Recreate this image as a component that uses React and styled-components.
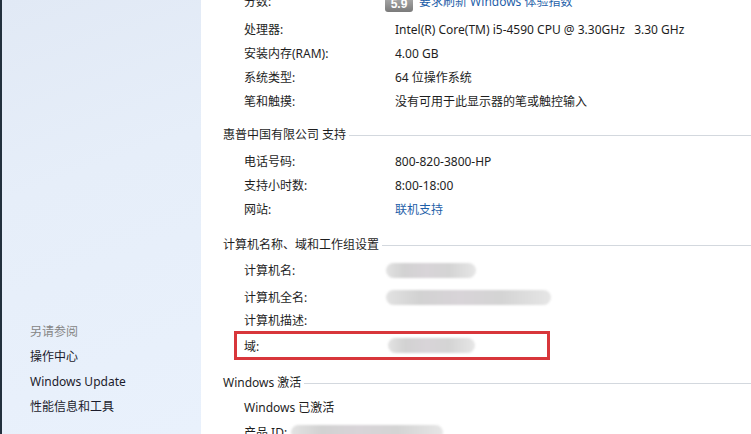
import React from "react";
import styled, { createGlobalStyle } from "styled-components";

/* -------------------------
   Data
   ------------------------- */
const systemRows = [
  { label: "处理器:", value: "Intel(R) Core(TM) i5-4590 CPU @ 3.30GHz   3.30 GHz" },
  { label: "安装内存(RAM):", value: "4.00 GB" },
  { label: "系统类型:", value: "64 位操作系统" },
  { label: "笔和触摸:", value: "没有可用于此显示器的笔或触控输入" },
];

const supportRows = [
  { label: "电话号码:", value: "800-820-3800-HP" },
  { label: "支持小时数:", value: "8:00-18:00" },
  { label: "网站:", value: "联机支持", link: true },
];

const sideLinks = ["操作中心", "Windows Update", "性能信息和工具"];

/* -------------------------
   Component
   ------------------------- */
const App = () => {
  return (
    <>
      <GlobalStyle />
      <Window>
        <Sidebar>
          <SideTitle>另请参阅</SideTitle>
          {sideLinks.map((l) => (
            <SideLink key={l}>{l}</SideLink>
          ))}
        </Sidebar>

        <Main>
          <Row $height={32} $first>
            <Label>分数:</Label>
            <Value>
              <Badge>5.9</Badge>
              <Link>要求刷新 Windows 体验指数</Link>
            </Value>
          </Row>
          {systemRows.map((r) => (
            <Row key={r.label}>
              <Label>{r.label}</Label>
              <Value>{r.value}</Value>
            </Row>
          ))}

          <Heading $top={11}>惠普中国有限公司 支持</Heading>
          <Group $top={5}>
            {supportRows.map((r) => (
              <Row key={r.label}>
                <Label>{r.label}</Label>
                <Value>{r.link ? <Link>{r.value}</Link> : r.value}</Value>
              </Row>
            ))}
          </Group>

          <Heading $top={13}>计算机名称、域和工作组设置</Heading>
          <Group $top={4}>
            <Row>
              <Label>计算机名:</Label>
              <Value>
                <Blur $width={90} $offset={-9} />
              </Value>
            </Row>
            <Row $top={3}>
              <Label>计算机全名:</Label>
              <Value>
                <Blur $width={165} $offset={-9} />
              </Value>
            </Row>
            <Row $height={22}>
              <Label>计算机描述:</Label>
            </Row>
            <Highlight>
              <Label>域:</Label>
              <Value>
                <Blur $width={87} $offset={-7} />
              </Value>
            </Highlight>
          </Group>

          <Heading $top={12}>Windows 激活</Heading>
          <Group $top={3}>
            <Row>
              <Plain>Windows 已激活</Plain>
            </Row>
            <Row $top={1}>
              <Plain>产品 ID:</Plain>
              <Blur $width={152} $offset={4} />
            </Row>
          </Group>
        </Main>
      </Window>
    </>
  );
};

/* -------------------------
   Styles
   ------------------------- */
const GlobalStyle = createGlobalStyle`
  html, body {
    margin: 0;
    padding: 0;
    overflow: hidden;
    background: #fff;
  }
  body {
    font-family: "Noto Sans", "Noto Sans CJK SC", sans-serif;
    font-size: 12px;
    color: #1e1e1e;
  }
`;

const Window = styled.div`
  display: flex;
  width: 751px;
  height: 434px;
  overflow: hidden;
`;

const Sidebar = styled.aside`
  width: 171px;
  flex: 0 0 auto;
  border-left: 2px solid #22303d;
  background: linear-gradient(160deg, #e1e9f5 0%, #e6eef9 40%, #e9f1fc 100%);
  display: flex;
  flex-direction: column;
  justify-content: flex-end;
  padding: 0 0 15px 28px;
`;

const SideTitle = styled.div`
  line-height: 25px;
  color: #858585;
`;

const SideLink = styled.div`
  line-height: 25px;
  color: #1b1b2c;
`;

const Main = styled.main`
  flex: 1;
  display: flex;
  flex-direction: column;
  padding-left: 22px;
  overflow: hidden;
  background: #fff;
`;

const Group = styled.div`
  display: flex;
  flex-direction: column;
  margin-top: ${({ $top }) => $top || 0}px;
`;

const Row = styled.div`
  display: flex;
  align-items: center;
  flex: 0 0 auto;
  height: ${({ $height }) => $height || 24}px;
  margin-top: ${({ $first, $top }) => ($first ? -15 : $top || 0)}px;
  padding-left: 21px;
`;

const Highlight = styled.div`
  display: flex;
  align-items: center;
  flex: 0 0 auto;
  width: 303px;
  height: 23px;
  margin-left: 11px;
  padding-left: 7px;
  border: 3px solid #d8363b;
`;

const Label = styled.div`
  width: 151px;
  flex: 0 0 auto;
  white-space: nowrap;
`;

const Value = styled.div`
  display: flex;
  align-items: center;
  white-space: pre;
`;

const Plain = styled.div`
  white-space: pre;
`;

const Link = styled.span`
  color: #1f5fa9;
`;

const Heading = styled.div`
  display: flex;
  align-items: center;
  height: 20px;
  flex: 0 0 auto;
  margin-top: ${({ $top }) => $top}px;
  white-space: nowrap;

  &::after {
    content: "";
    flex: 1;
    height: 1px;
    margin: 2px 0 0 3px;
    background: #d3d8de;
  }
`;

const Badge = styled.span`
  display: inline-flex;
  align-items: center;
  justify-content: center;
  width: 28px;
  height: 16px;
  margin: 6px 6px 0 -10px;
  border-radius: 3px;
  background: linear-gradient(#b0b0b0, #7a7a7a);
  color: #fff;
  font-family: "Liberation Sans", sans-serif;
  font-weight: bold;
  font-size: 12px;
`;

const Blur = styled.div`
  width: ${({ $width }) => $width}px;
  height: 15px;
  margin-left: ${({ $offset }) => $offset}px;
  border-radius: 8px;
  background: linear-gradient(
    90deg,
    #e2e2e2 0%,
    #d2d2d2 20%,
    #d8d4d8 45%,
    #d4d4d4 70%,
    #e6e6e6 100%
  );
  filter: blur(1.2px);
`;

export default App;
